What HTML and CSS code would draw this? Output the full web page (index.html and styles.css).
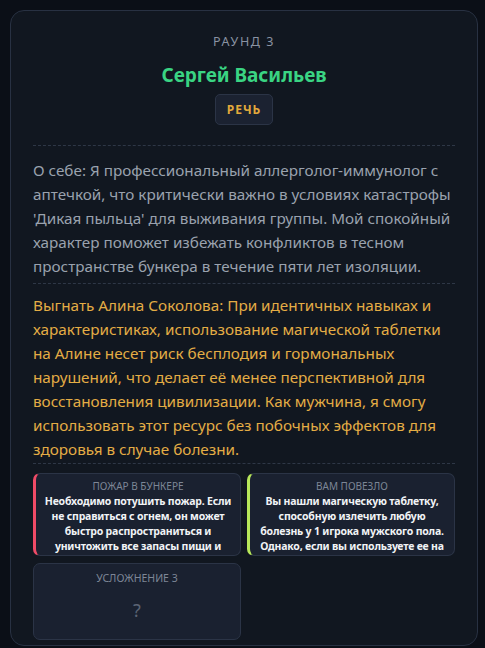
FILE: index.html
```html
<!DOCTYPE html>
<html lang="ru">
<head>
<meta charset="utf-8">
<link rel="stylesheet" href="styles.css">
</head>
<body>
<main class="card">
  <div class="round">РАУНД 3</div>
  <h1 class="name">Сергей Васильев</h1>
  <div class="badge-wrap"><span class="badge">РЕЧЬ</span></div>
  <hr class="divider divider-top">
  <p class="bio">О себе: Я профессиональный аллерголог-иммунолог с аптечкой, что критически важно в условиях катастрофы 'Дикая пыльца' для выживания группы. Мой спокойный характер поможет избежать конфликтов в тесном пространстве бункера в течение пяти лет изоляции.</p>
  <hr class="divider divider-mid">
  <p class="vote">Выгнать Алина Соколова: При идентичных навыках и характеристиках, использование магической таблетки на Алине несет риск бесплодия и гормональных нарушений, что делает её менее перспективной для восстановления цивилизации. Как мужчина, я смогу использовать этот ресурс без побочных эффектов для здоровья в случае болезни.</p>
  <hr class="divider divider-end">
  <div class="events">
    <div class="event event-red">
      <div class="event-title">ПОЖАР В БУНКЕРЕ</div>
      <div class="event-text">Необходимо потушить пожар. Если не справиться с огнем, он может быстро распространиться и уничтожить все запасы пищи и</div>
    </div>
    <div class="event event-green">
      <div class="event-title">ВАМ ПОВЕЗЛО</div>
      <div class="event-text">Вы нашли магическую таблетку, способную излечить любую болезнь у 1 игрока мужского пола. Однако, если вы используете ее на</div>
    </div>
    <div class="event event-hidden">
      <div class="event-title">УСЛОЖНЕНИЕ 3</div>
      <div class="event-q">?</div>
    </div>
  </div>
</main>
</body>
</html>
```

FILE: styles.css
```css
* { box-sizing: border-box; }
html, body { margin: 0; padding: 0; }
body {
  background: #0b0f17;
  font-family: "Noto Sans", "Open Sans", sans-serif;
  padding: 10px 8px 0 10px;
  height: 648px;
  overflow: hidden;
}
.card {
  width: 468px;
  height: 636px;
  background: #111720;
  border: 1px solid #283142;
  border-radius: 14px;
  padding: 22px 22px 0 22px;
}
.round {
  text-align: center;
  color: #8a93a3;
  font-size: 12.5px;
  letter-spacing: 1.6px;
  line-height: 18px;
}
.name {
  margin: 12px 0 0 0;
  text-align: center;
  color: #3ad483;
  font-size: 19px;
  font-weight: 700;
  line-height: 24px;
}
.badge-wrap { display: flex; justify-content: center; margin-top: 7px; }
.badge {
  display: inline-block;
  background: #1b2231;
  border: 1px solid #2b3446;
  border-radius: 5px;
  color: #e2a93b;
  font-size: 12px;
  font-weight: 700;
  letter-spacing: 1px;
  padding: 6px 11px;
  line-height: 17px;
}
.divider {
  border: none;
  border-top: 1px dashed #2e3746;
  height: 0;
  margin: 0;
}
.divider-top { margin-top: 20px; }
.divider-mid { margin-top: 5px; }
.divider-end { margin-top: 2px; }
.bio, .vote {
  margin: 0;
  font-size: 15.27px;
  line-height: 24px;
}
.bio { color: #9aa2ae; padding-top: 12px; }
.vote { color: #e4ad45; padding-top: 9px; }
.events {
  display: grid;
  grid-template-columns: 1fr 1fr;
  gap: 7px 6px;
  margin-top: 9px;
}
.event {
  background: #1a2130;
  border: 1px solid #2b3446;
  border-radius: 7px;
  height: 83px;
  overflow: hidden;
  padding: 5px 6px 0 6px;
  text-align: center;
}
.event-red { border-left: 3px solid #ef4b67; }
.event-green { border-left: 3px solid #b8e85a; }
.event-title {
  color: #7d8696;
  font-size: 10px;
  line-height: 15px;
}
.event-text {
  color: #f1f3f6;
  font-size: 10.5px;
  letter-spacing: -0.2px;
  font-weight: 700;
  line-height: 15px;
}
.event-hidden { height: 77px; padding-top: 7px; }
.event-hidden .event-title { font-size: 10.5px; }
.event-q {
  color: #5b6474;
  font-size: 18px;
  margin-top: 14px;
  line-height: 20px;
}
```
